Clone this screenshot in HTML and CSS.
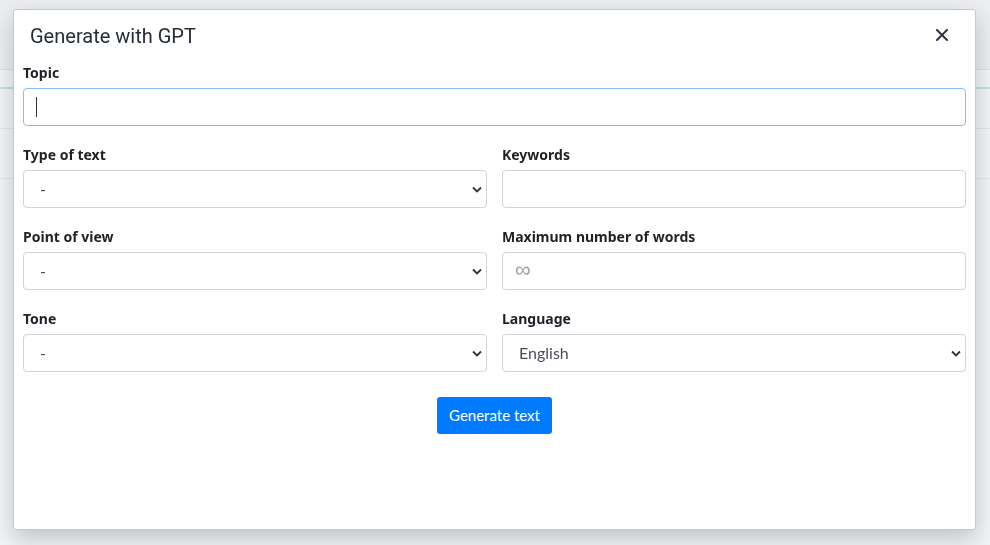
FILE: index.html
```html
<!DOCTYPE html>
<html lang="en">
<head>
<meta charset="utf-8">
<title>Generate with GPT</title>
<link rel="stylesheet" href="styles.css">
</head>
<body>
<div class="page">
  <div class="page-top"></div>
  <div class="page-teal"></div>
  <div class="page-row"></div>
  <div class="page-row tall"></div>
</div>
<div class="overlay">
  <div class="modal">
    <div class="modal-header">
      <h1 class="modal-title">Generate with GPT</h1>
      <button class="close" type="button" aria-label="Close">
        <svg width="12" height="12" viewBox="0 0 12 12"><path d="M1 1L11 11M11 1L1 11" stroke="#2d3542" stroke-width="2" stroke-linecap="square"/></svg>
      </button>
    </div>
    <div class="modal-body">
      <div class="group">
        <label class="label">Topic</label>
        <div class="caret-wrap">
          <input class="control focused" type="text">
          <span class="caret"></span>
        </div>
      </div>
      <div class="grid">
        <div class="group">
          <label class="label">Type of text</label>
          <select class="control select"><option>-</option></select>
        </div>
        <div class="group">
          <label class="label">Keywords</label>
          <input class="control" type="text">
        </div>
        <div class="group">
          <label class="label">Point of view</label>
          <select class="control select"><option>-</option></select>
        </div>
        <div class="group">
          <label class="label">Maximum number of words</label>
          <input class="control" type="text" placeholder="∞">
        </div>
        <div class="group">
          <label class="label">Tone</label>
          <select class="control select"><option>-</option></select>
        </div>
        <div class="group">
          <label class="label">Language</label>
          <select class="control select"><option>English</option></select>
        </div>
      </div>
      <div class="actions">
        <button class="btn" type="button">Generate text</button>
      </div>
    </div>
  </div>
</div>
</body>
</html>
```
FILE: styles.css
```css
html, body {
  margin: 0;
  padding: 0;
}
body {
  width: 990px;
  height: 545px;
  overflow: hidden;
  background: #f3f4f5;
  font-family: "Lato", "Noto Sans", sans-serif;
  color: #212529;
}
.page {
  display: flex;
  flex-direction: column;
}
.page-top {
  height: 69px;
  background: #eceef0;
  border-bottom: 1px solid #dfe1e4;
}
.page-teal {
  margin-top: 17px;
  height: 2px;
  background: #bfe0e3;
}
.page-row {
  height: 39px;
  border-bottom: 1px solid #e4e6e9;
}
.page-row.tall {
  height: 49px;
}
.overlay {
  position: fixed;
  inset: 0;
}
.modal {
  position: absolute;
  left: 13px;
  top: 9px;
  width: 961px;
  height: 519px;
  background: #fff;
  border: 1px solid #c6c8cc;
  border-radius: 3px;
  box-shadow: 0 9px 22px rgba(40, 50, 70, 0.25);
}
.modal-header {
  display: flex;
  align-items: center;
  justify-content: space-between;
  height: 51px;
  padding: 0 26px 0 16px;
}
.modal-title {
  margin: 0;
  font-family: "Roboto", sans-serif;
  font-weight: 400;
  font-size: 20px;
  color: #272d36;
  padding-top: 1px;
}
.close {
  border: 0;
  background: none;
  padding: 0;
  margin-top: -2px;
  width: 14px;
  height: 14px;
  display: flex;
  align-items: center;
  justify-content: center;
  cursor: pointer;
}
.modal-body {
  padding: 2px 9px 0 9px;
}
.group {
  display: flex;
  flex-direction: column;
  margin-bottom: 19px;
}
.label {
  font-family: "Noto Sans", sans-serif;
  font-weight: 700;
  font-size: 14px;
  line-height: 20px;
  height: 20px;
  margin-bottom: 5px;
  color: #1e2125;
}
.caret-wrap {
  position: relative;
  display: flex;
}
.caret {
  position: absolute;
  left: 13px;
  top: 9px;
  width: 1px;
  height: 20px;
  background: #333;
}
.control {
  box-sizing: border-box;
  width: 100%;
  height: 38px;
  margin: 0;
  border: 1px solid #ced4da;
  border-radius: 4px;
  background: #fff;
  padding: 0 12px 1px;
  font-family: "Lato", "Noto Sans", sans-serif;
  font-size: 16px;
  color: #495057;
  outline: none;
}
.control::placeholder {
  font-family: "Liberation Sans", sans-serif;
  font-size: 22px;
  color: #9aa0a6;
}
.control.focused {
  border-color: #86bdf5;
}
.select {
  appearance: none;
  -webkit-appearance: none;
  padding-left: 16px;
  background-image: url("data:image/svg+xml,%3Csvg xmlns='http://www.w3.org/2000/svg' width='10' height='7' viewBox='0 0 10 7'%3E%3Cpath d='M1 1.5L5 5.5L9 1.5' fill='none' stroke='%23333' stroke-width='1.8'/%3E%3C/svg%3E");
  background-repeat: no-repeat;
  background-position: right 4px center;
}
.grid {
  display: grid;
  grid-template-columns: 1fr 1fr;
  column-gap: 15px;
}
.actions {
  display: flex;
  justify-content: center;
  padding-top: 6px;
}
.btn {
  height: 37px;
  width: 115px;
  border: 0;
  border-radius: 3px;
  background: #007bff;
  color: #fff;
  font-family: "Lato", "Noto Sans", sans-serif;
  font-size: 15px;
  padding: 0 0 2px;
  cursor: pointer;
}
```
